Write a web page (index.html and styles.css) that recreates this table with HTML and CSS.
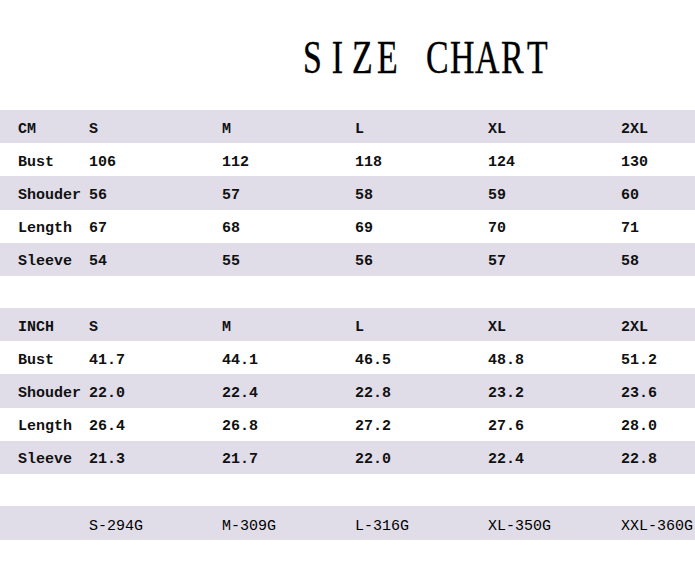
FILE: index.html
```html
<!DOCTYPE html>
<html>
<head>
<meta charset="utf-8">
<link rel="stylesheet" href="styles.css">
</head>
<body>
<div class="page">
  <header class="title-area"><h1 class="title"><span>S</span><span>I</span><span>Z</span><span>E</span><span> </span><span>C</span><span>H</span><span>A</span><span>R</span><span>T</span></h1></header>

  <section class="chart cm">
    <div class="row band"><span>CM</span><span>S</span><span>M</span><span>L</span><span>XL</span><span>2XL</span></div>
    <div class="row"><span>Bust</span><span>106</span><span>112</span><span>118</span><span>124</span><span>130</span></div>
    <div class="row band"><span>Shouder</span><span>56</span><span>57</span><span>58</span><span>59</span><span>60</span></div>
    <div class="row"><span>Length</span><span>67</span><span>68</span><span>69</span><span>70</span><span>71</span></div>
    <div class="row band"><span>Sleeve</span><span>54</span><span>55</span><span>56</span><span>57</span><span>58</span></div>
  </section>

  <section class="chart inch">
    <div class="row band"><span>INCH</span><span>S</span><span>M</span><span>L</span><span>XL</span><span>2XL</span></div>
    <div class="row"><span>Bust</span><span>41.7</span><span>44.1</span><span>46.5</span><span>48.8</span><span>51.2</span></div>
    <div class="row band"><span>Shouder</span><span>22.0</span><span>22.4</span><span>22.8</span><span>23.2</span><span>23.6</span></div>
    <div class="row"><span>Length</span><span>26.4</span><span>26.8</span><span>27.2</span><span>27.6</span><span>28.0</span></div>
    <div class="row band"><span>Sleeve</span><span>21.3</span><span>21.7</span><span>22.0</span><span>22.4</span><span>22.8</span></div>
  </section>

  <section class="weights">
    <div class="row band weight-row"><span></span><span>S-294G</span><span>M-309G</span><span>L-316G</span><span>XL-350G</span><span>XXL-360G</span></div>
  </section>
</div>
</body>
</html>
```

FILE: styles.css
```css
html, body {
  margin: 0;
  padding: 0;
  background: #ffffff;
}

body {
  width: 695px;
  height: 586px;
  overflow: hidden;
  font-family: "Liberation Mono", "DejaVu Sans Mono", monospace;
  color: #111111;
}

.page {
  display: flex;
  flex-direction: column;
}

.title-area {
  height: 110px;
  box-sizing: border-box;
  padding-left: 300px;
  padding-top: 34px;
}

.title {
  margin: 0;
  font-family: "Liberation Serif", "Times New Roman", serif;
  font-weight: normal;
  font-size: 47px;
  line-height: 47px;
  color: #000000;
  display: flex;
  transform: scaleX(0.72);
  transform-origin: left center;
  white-space: pre;
  -webkit-text-stroke: 0.4px #000000;
}

.title span {
  display: block;
  width: 34.7px;
  text-align: center;
}

.chart {
  display: flex;
  flex-direction: column;
}

.chart.inch {
  margin-top: 32px;
}

.weights {
  margin-top: 32px;
}

.row {
  display: grid;
  grid-template-columns: 71px repeat(4, 133px) 1fr;
  align-items: center;
  height: 33.2px;
  box-sizing: border-box;
  padding-left: 18px;
  padding-top: 5px;
  font-size: 15px;
  font-weight: bold;
  white-space: nowrap;
}

.band {
  background: #e0dde9;
}

.weight-row {
  height: 34px;
  font-weight: normal;
  color: #000000;
  padding-top: 7px;
}
```
